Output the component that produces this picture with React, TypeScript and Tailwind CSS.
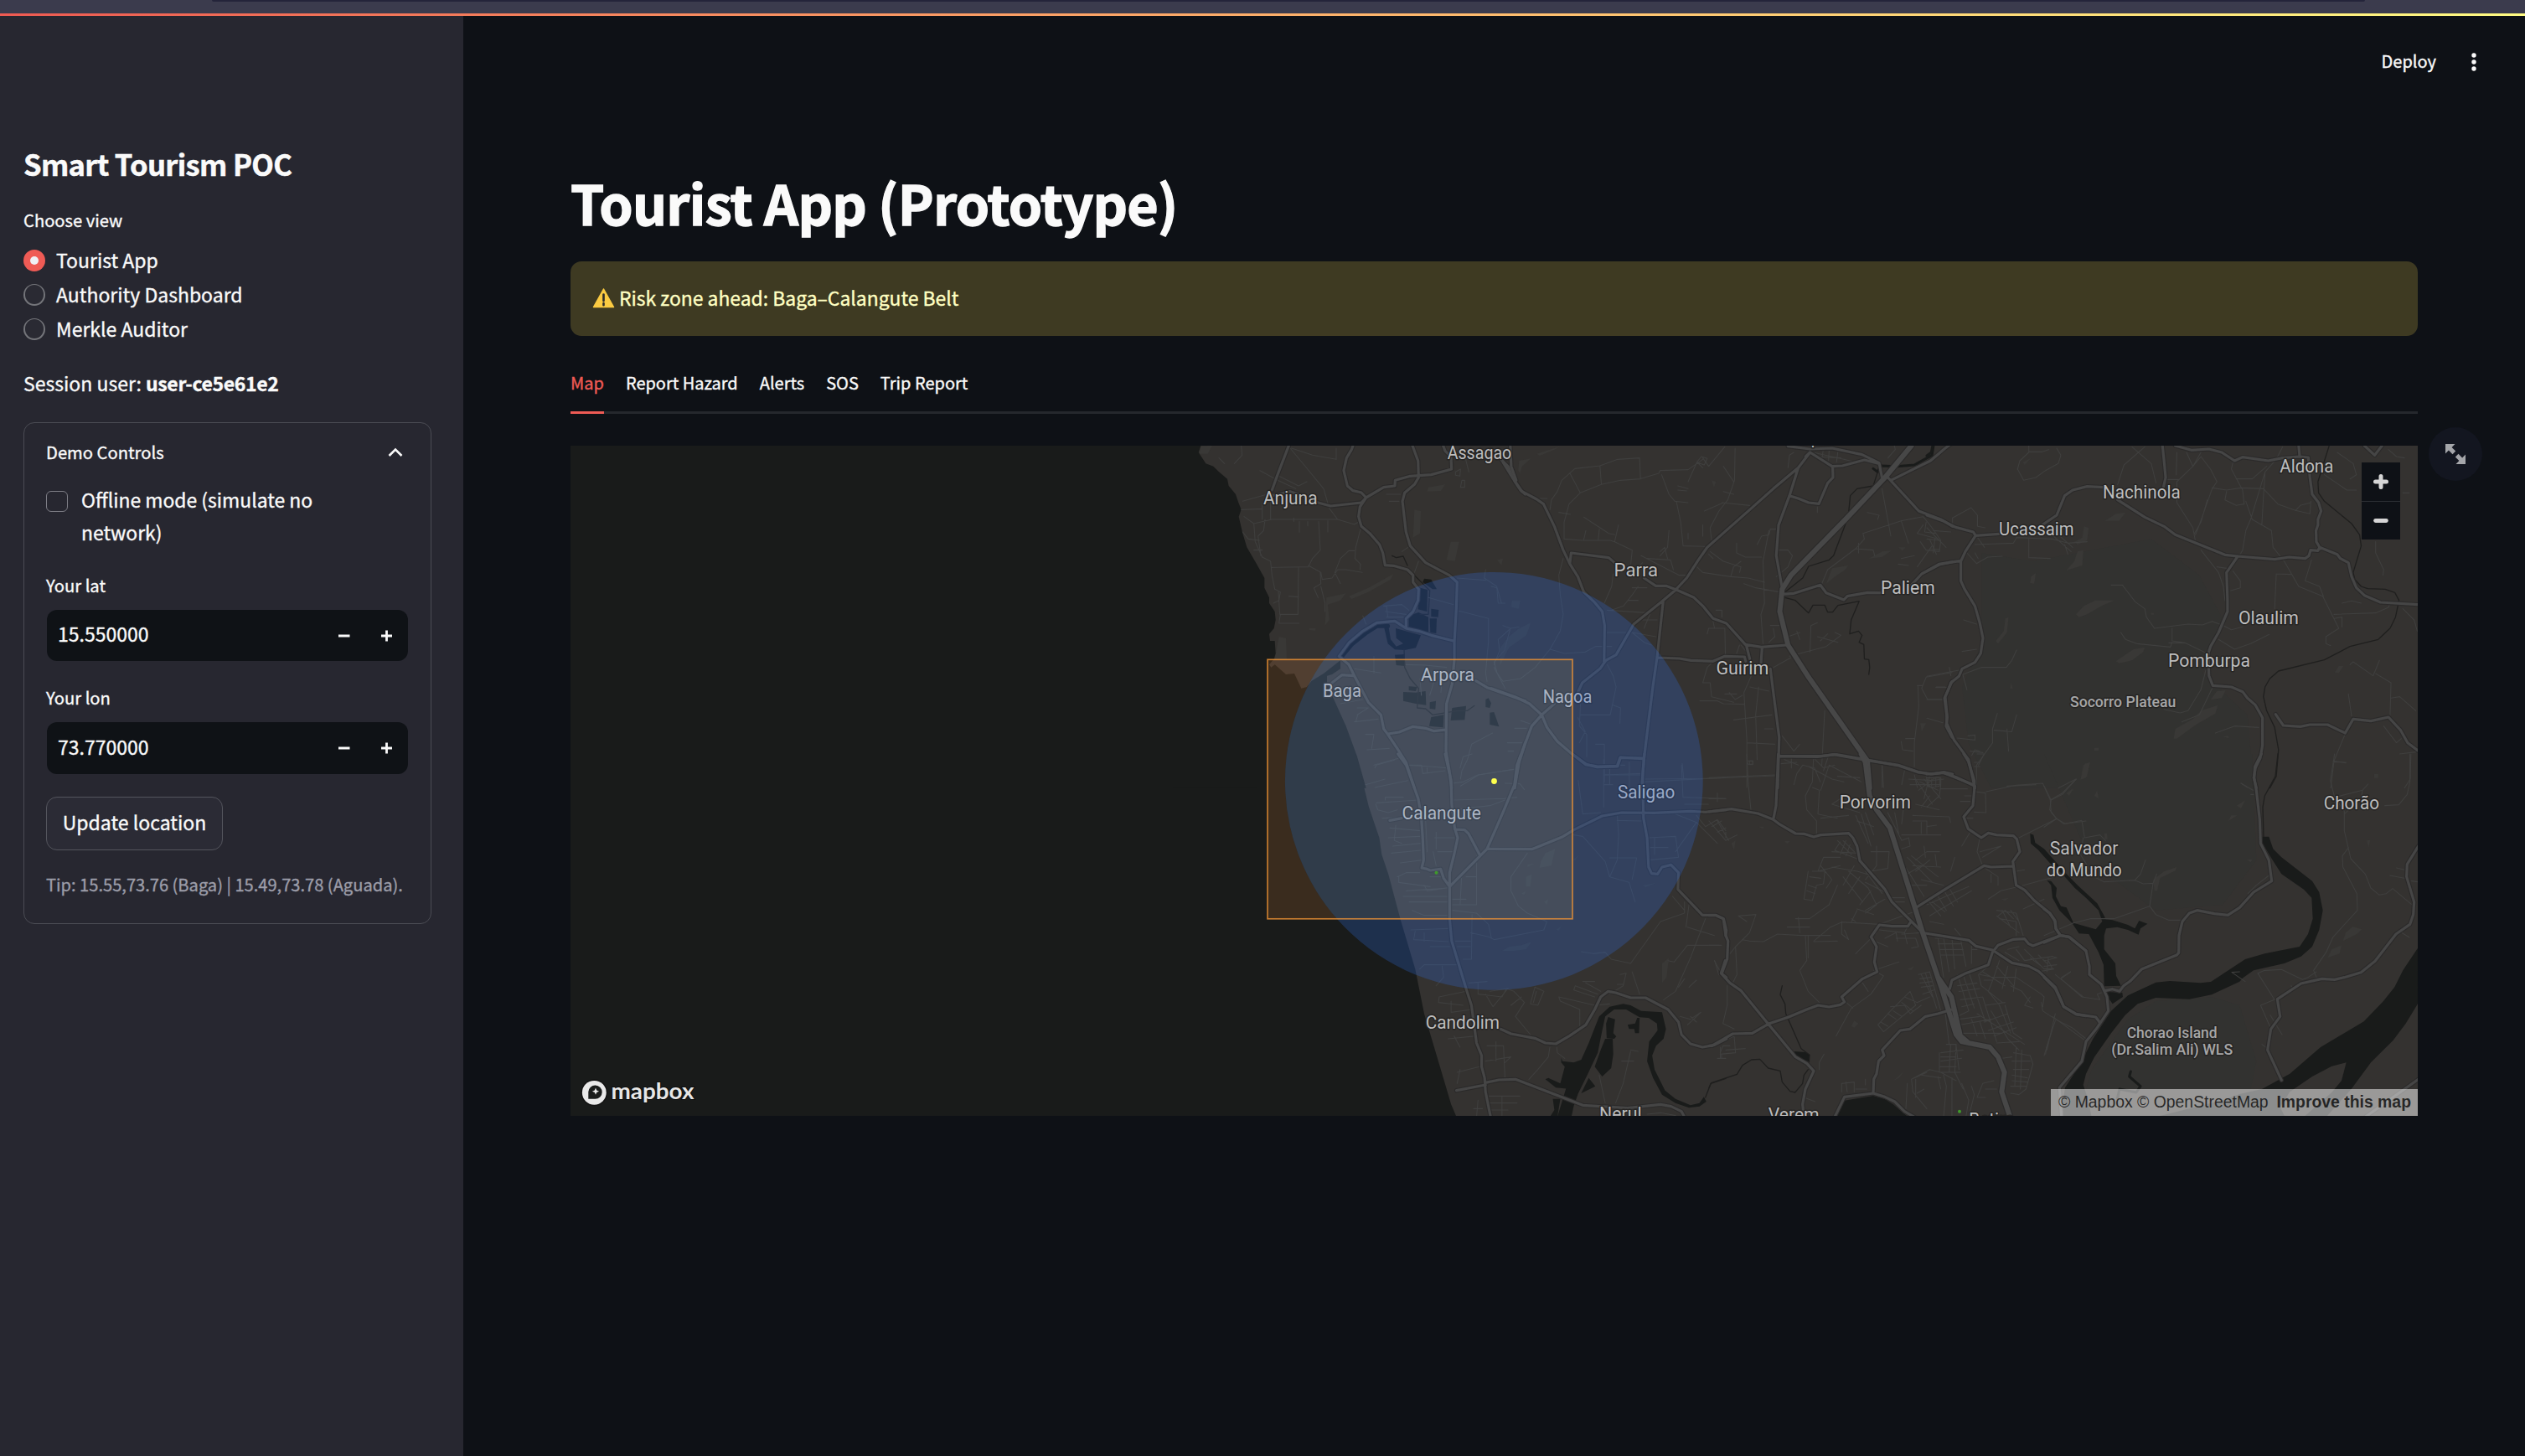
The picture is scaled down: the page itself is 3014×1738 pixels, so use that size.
import React from "react";

type Tile = {
  transform: string;
  shade?: string;
  patch: string;
  water: string;
  river?: string;
  creek?: string;
  stream?: string;
  minor: string;
  major: string;
  highway?: string;
};

// Road and water geometry, one entry per map tile.
const tiles: Tile[] = [
  {
    transform: "translate(1400 520) scale(0.33333)",
    patch:
      "M865,265L888,270L885,350L860,365ZM995,380L1025,380L1010,450L980,445ZM550,580L620,565L600,590L555,605L560,660L545,680ZM630,575L700,545L790,495L780,515L700,560L640,585ZM380,720L405,725L408,800L365,800ZM915,185L975,175L960,198L910,200ZM100,38L140,36L125,65L95,65ZM1215,590L1245,590L1235,620L1210,612ZM488,690L512,690L510,698L488,696Z",
    water:
      "M0,36L100,36L92,60L118,100L145,110L165,130L195,155L200,180L225,210L235,240L245,265L236,290L250,350L265,400L300,460L328,510L328,545L345,580L345,600L365,630L368,660L362,690L345,710L348,735L365,735L368,780L362,800L345,820L352,830L365,820L405,855L435,852L460,905L480,900L497,878L540,852L600,805L600,835L570,855L552,860L552,885L570,930L620,1040L660,1150L692,1262L0,1262ZM900,512L925,515L945,550L930,550L895,525ZM885,545L912,552L910,630L878,622ZM845,645L880,633L915,650L915,703L880,708L845,690ZM925,620L952,624L950,650L925,648ZM920,655L945,655L943,708L922,705ZM755,680L772,682L780,730L800,755L825,745L800,725L798,690L888,715L870,760L830,768L795,766L770,745ZM795,785L830,783L832,825L800,822ZM825,918L870,920L905,915L907,965L870,960L825,950ZM845,898L875,900L870,915L845,912ZM920,955L942,950L940,980L920,978ZM925,1008L970,1000L968,1045L918,1040ZM1000,975L1050,968L1045,1018L995,1020ZM1120,945L1130,940L1140,958L1135,975L1120,972ZM1135,992L1150,990L1168,1042L1135,1035Z",
    creek: "M604,792L640,748L690,708L730,682L770,682",
    stream:
      "M785,430L800,437L825,432L840,465M860,495L895,530L920,555L915,640L885,640M828,765L830,830L850,870L880,905L875,975L905,978L930,1000L1020,985L1055,985L1080,967",
    minor:
      "M165,80L185,100M245,36L248,70L220,100M312,125L375,160L440,190M420,45L470,105L540,190L560,260L590,300M425,45L500,70L585,85L585,45M380,145L450,180L480,165M250,235L330,212M245,265L320,262M255,290L290,315L355,300L590,300L650,318L672,305M350,215L350,300M320,240L320,300M433,295v12M453,308v38M483,308v15M555,305L555,345M522,308L528,410L500,440L485,470L355,472M290,315L295,380L320,435L350,450L355,500L365,550L385,560L380,590L360,600M450,472L448,640L385,640L380,672L452,672M672,335L655,400L652,440L672,460L670,480M485,465L530,490L535,515L570,510L590,480L620,480L678,490M650,412L630,412L600,440L580,490L600,530M528,490L530,530L505,545L520,580M530,540L545,600L545,630M383,640L378,560M330,300L325,340L305,360L315,430M250,345L270,370L310,375M290,410L320,410M415,575L450,578M755,610L820,605L845,625M760,630L835,640M765,650L825,650M765,610L770,650M680,645L692,675M820,415L842,400M880,450L865,490M1018,510L1120,518M1120,480L1115,510L1160,540L1165,600L1190,600M1025,628L1130,655L1130,740L1120,850L1125,880M1150,820L1170,770L1165,730L1210,690L1240,685M915,580L1005,605M650,835L745,850M720,790v60M835,820L905,822L980,830M1150,830L1190,905M650,1025L735,1015M655,1025L662,1000M690,1070L720,1070L712,1120M695,1125L775,1120M720,1180L810,1155M690,1250L760,1230M1030,1255L1095,1215L1220,1195M1145,1065L1070,1105L1055,1160L1035,1200L1030,1230M850,1180L890,1180L895,1210L975,1200M1200,1100h50M1200,1130h20M935,880L920,930M885,870L890,930M965,860L960,920M600,960L680,945M660,975L700,975L660,1000M1012,130L1030,120L1028,145L1012,142ZM1045,160L1045,185L1030,185L1035,160ZM1060,130L1045,70M765,210h50M775,235h35",
    major:
      "M415,36L375,140L355,195M355,215L420,200L450,210L520,240L565,252L675,240L692,222M645,36L640,50L622,80L612,125L625,180L645,197L675,204L692,222L755,185L795,180L796,160L850,145L925,140L998,120L996,75M692,222L670,255L665,290L675,325L705,350L740,390L752,420L760,464L790,466L840,480L860,500L860,525L880,550L878,590L860,630L835,655L835,688M858,36L878,90L880,150L865,175L830,205L822,235L835,345L850,395L905,455L990,500L1018,525L1015,620L1008,740L1008,800L1000,890L980,960L978,1130L990,1200L998,1262M595,790L632,740L680,700L730,670L795,664L835,690L880,700L925,715L1005,735M595,790L630,820L650,860L700,955L745,1000L755,1050L770,1070L800,1115L835,1170L865,1262M570,885L605,857L648,860M770,1068L810,1062L860,1042L905,1048L935,1058L978,1053M1085,878L1125,902L1262,950M1262,1100L1240,1170L1222,1262M1165,75L1200,110L1225,165L1245,195L1262,210M968,36L975,55L996,75",
  },
  {
    transform: "translate(1780 520) scale(0.35077 0.33333)",
    patch:
      "M155,65L235,38L215,50L165,72ZM30,760L60,720L95,690L135,670L120,715L60,760L30,825ZM1160,475L1215,465L1205,480L1170,505L1140,530ZM1285,440L1330,415L1362,412L1330,435ZM70,595L98,590L95,620L70,615ZM95,90L135,82L105,110L98,135L92,125ZM20,445L40,440L35,465ZM750,160L765,165L758,185ZM1460,1030L1480,1030L1465,1060ZM1385,400L1410,400L1400,412Z",
    water: "",
    river: "M1300,118L1315,130L1325,108L1380,110L1440,105L1500,70L1505,36",
    stream:
      "M1315,130L1300,180L1245,190L1222,215L1215,290L1165,430L1150,445L1080,468L1060,510L1000,560M1000,580L1035,590L1080,635L1095,607L1135,607L1145,632L1162,632L1180,608L1252,593L1225,660L1220,710L1250,700L1262,715L1252,740L1268,748L1270,800L1285,802L1288,830L1285,855",
    minor:
      "M200,265L205,230L225,200L240,160L285,118L370,108L430,85L505,80L508,155M165,225h25M230,275L270,282M268,135L303,205M370,108L375,175M508,155L440,160L375,175L303,205L265,245L248,310L248,370L310,375L405,375L420,380L480,410L475,460M315,292L400,350L420,355M433,320L420,380M322,340L315,372M368,335L364,375M505,155L570,135L575,125L670,122L720,85M580,140L605,210L625,235L670,240M630,235L645,310L653,395L730,397M830,45L828,160L805,230L775,270L745,330L750,375M720,80L740,110L795,40M700,95L715,75L735,82L725,105ZM720,115L700,95L670,165M790,110L825,165M790,200L825,210M635,180L670,190M635,195L665,198M785,240L880,250M725,270L790,240M605,340L600,400L575,430M575,415L590,400L600,440M510,430L640,500L680,500M515,455L500,470M530,440L610,445L620,480M700,470L720,490L815,505L875,510L930,525M745,415L790,450L850,470L845,490M740,425L755,440M815,505L825,470L850,450M835,385L835,420L865,435L920,435M905,390L920,360L945,355L950,335L970,335M945,340L925,450L930,600L918,640L925,745M978,410L1010,410L1025,430L1010,470L970,505M860,530L900,545L980,560M415,495L410,540L385,600M245,440L230,500L235,570L245,640L235,700L200,765L150,830L100,870L40,880M200,765L250,780L320,775L355,755L410,755M395,625L540,635M500,540L480,570L450,610L410,625M480,545h50M465,590h35M540,640L520,690M515,660h50M385,705L480,705L560,720M480,705L520,740L545,750M395,820L415,860L425,900L405,1000L305,1000M305,940L300,1040L325,1070L325,1150M295,1010L320,1060L300,1100M415,965L440,975L438,1030M355,1105h30L385,1240M470,1170L470,1260M385,1215L515,1215M395,1180h60M515,1230L720,1228L968,1218M650,1175L655,1230M1280,275L1320,285L1315,300M1265,350L1395,305L1470,290L1500,330L1530,375L1525,415L1480,410L1460,380M1330,190L1360,360M1395,305L1420,385M1265,350L1270,370L1240,405L1145,480L1125,530M1240,405L1300,410L1305,430M1250,385v35M1500,395L1450,470M1470,320L1450,350L1520,370M1480,310L1475,345L1510,350M1395,440L1440,430M1385,460L1420,465M735,710L740,690L795,690L797,790M755,665L760,690M765,625L785,625L785,650M960,690L965,720L945,740M950,680h30M1085,775L1088,680L1110,670M1015,790L1140,755L1190,715L1170,705M1110,720L1180,740M1120,735L1145,710M960,830L1020,795M1010,720L1050,705M1040,700L1050,730M720,885L735,830L750,815M720,885L745,885L750,935L825,955M710,950L770,950L790,960L860,962M810,920L830,945L855,930M795,925h40M885,860L860,920L870,1090L870,1260M910,900L900,1000L905,1160M880,900L945,915M825,1018L955,1000M870,1100L965,1105M930,1050h30M1135,985L1125,1180M990,1075L1030,1130L1050,1105M1480,865L1568,848M1480,865L1465,905L1485,945L1545,945M1452,895L1455,970L1440,1100L1440,1185M1450,895L1468,895M1515,900h30M1395,1095L1400,1125L1435,1130M1410,1085h30M1060,1180L1100,1190L1120,1240M1060,1180L1040,1210L1030,1250M985,1175L1040,1170M1080,1185L1160,1230L1200,1240M1330,1170L1335,1260M1420,1230L1500,1235L1540,1230M1440,1215L1450,1260M1480,1220L1490,1260M10,810L45,770L65,690L40,680M10,810L20,850L40,880M0,540L20,545L35,600M55,1100h45M80,1048h40M100,1020L140,1035M870,1165L890,1165L890,1178L875,1178Z M1010,115L1015,70L1030,60M1110,255v20M1095,60L1200,85L1240,95M1130,50L1125,85M1150,50L1148,90M1180,55L1175,95M1100,75L1190,80M1350,80L1375,50L1372,36M865,770L850,750M835,780L845,750M670,350v20M720,320v40",
    major:
      "M40,95L75,155L105,200L155,228L178,245L215,325L245,410L268,460L295,505L315,560L350,595L378,630L386,680L384,810M65,36L68,110L85,160M268,455L272,420L400,437L425,460M520,510L560,538L595,538L630,552L690,580L720,610L755,655L800,672L865,748L920,757L1005,750M1085,60L1045,115L960,190L880,265L735,400L705,445L665,510L625,555L580,595L485,675L425,785L390,805L370,835L310,885L290,930M1045,115L1015,215L978,320L970,430L990,545M1015,215L1045,225L1080,240L1115,244L1145,170L1163,150L1162,110M1010,38L1085,48L1160,45L1262,68L1320,98L1330,150M1070,75L1085,60L1160,110L1195,108L1270,87L1320,100M1350,150L1455,270L1530,300L1570,325M1360,160L1495,90L1545,45L1570,25M585,595L565,790L550,900L520,1155L512,1262M565,795L640,798L680,805L755,808L795,790L862,792L866,808M868,750L880,800M922,757L918,815M950,835L965,960L980,1080L975,1262M990,568L1030,565L1120,535L1140,563L1200,588L1212,575L1280,562L1325,563M1430,535L1465,495L1525,462L1570,452M980,1148L1110,1150L1165,1142L1280,1163L1385,1180L1455,1205L1500,1212L1540,1205L1570,1212M0,905L80,935L130,960L172,1000L190,1045L225,1095L275,1140L325,1178L360,1187L430,1185L440,1152L515,1157M172,1000L138,1040L95,1160L80,1262M172,1000L215,960M1568,880L1545,935L1552,1010L1548,1040L1568,1080",
    highway: "M1430,36L1340,150L1210,295L1020,500L990,550L982,630L1010,750L1080,865L1280,1165L1288,1262",
  },
  {
    transform: "translate(2300 520) scale(0.38265 0.33333)",
    shade: "M170,420L330,450L700,370L850,500L920,650L860,850L1000,1000L1020,1262L200,1262L130,1100L110,900L170,750Z",
    patch:
      "M555,305L590,280L620,275L600,305ZM490,325L505,330L500,375L470,390L460,380L485,365ZM465,640L490,610L525,590L585,590L545,610L500,640L475,650ZM470,415L488,410L485,465L435,483L460,450ZM245,655L255,650L250,705L222,745L215,735L240,700ZM590,808L625,780L645,765L680,758L675,775L640,805L600,815ZM770,1085L775,1050L830,1015L855,985L908,965L900,995L840,1035L810,1060L780,1085ZM885,945L905,915L932,912L920,940ZM325,505L340,492L335,530L322,528ZM488,1180L508,1170L500,1220L480,1230ZM1272,848L1285,825L1300,825L1285,850ZM300,95L325,80L305,105ZM925,1078L940,1075L942,1084ZM1398,1213h10v12h-10ZM698,635h10v6h-8ZM522,1118h14v10h-14ZM262,885L268,905L260,905Z",
    water: "",
    stream:
      "M1255,36L1220,165L1222,205L1240,235L1325,315L1350,355L1355,395L1330,490L1335,515L1355,540L1375,548L1430,550L1460,562L1473,590L1462,650L1445,690L1408,730L1320,755L1240,803L1097,843L1070,870L1055,900L1050,935L1060,985L1085,1045L1097,1125L1090,1220L1070,1262",
    river: "M0,72L14,60L18,36",
    minor:
      "M318,36L318,60L290,90L283,120L302,160M318,58L360,58L380,50M405,45L418,70L410,100L370,125L340,150L302,160M595,175L615,105L660,60L680,40M640,40L700,100L715,170M810,60L830,110L780,165L780,240L830,330L838,380M780,60L778,140M750,157L785,157M830,110L855,75L885,120L905,165L890,190L850,320L838,355M855,60L830,110M875,230L855,310L835,350M890,187L935,195L980,187L1050,190L1095,245L1150,268L1195,280L1198,235M1150,268L1165,250L1198,240M930,230L935,200M930,230L965,250L990,245L985,195L950,120L955,95M965,155h50L1060,110M1090,85L1055,130L1010,300L995,340L985,410L975,430M1055,130L1050,220L1045,320M1110,40L1090,85M995,235L1015,300L1075,340L1080,400L1115,450L1160,540L1235,575L1285,690L1245,720L1245,745L1260,752M1090,495L1085,620M1090,495L1135,497M855,410L910,490L925,540L930,590M905,470L935,475M955,485L978,520L978,545L948,555M1200,445L1180,520L1225,540L1237,575M1270,640L1400,635L1440,615L1445,600M1270,655L1295,650L1295,685M1295,600L1325,592L1355,600M575,535L610,535L650,595L680,620L685,650L710,690L815,675L860,678L890,665L925,680L950,695L985,685M605,705L620,730L655,745L760,757L765,740M765,690L765,735L805,742L870,778M755,742h50M910,730L960,765L1010,745L1068,712M280,768L265,805L248,830L170,830L112,855M112,855L125,910M0,862L100,840M70,830L75,860M28,902h35M0,945h50M0,1012L50,1028M110,773L155,765M115,660L155,675M150,390L270,385L280,365L390,370L440,385L500,380M318,370L318,437L385,440M385,350L450,415M400,345L455,400M430,390L440,425M80,295L138,258L158,285L158,325L182,330M80,295L80,325M155,360L180,400M125,420L155,458L190,435L235,432M150,420L160,440M0,330L60,400M20,340L75,345M0,370L40,375M10,375L30,425M25,370L20,420M10,405L40,408M870,840L855,910L815,985L790,993L740,980M890,905L850,1000L795,1025M220,995L205,1050L205,1100L155,1180L155,1262M250,1050L255,1130M210,1055L265,1060L280,1000M95,1083L150,1090L150,1072L128,1075M135,1130L175,1135M140,1145L150,1125L165,1130M1320,820L1330,810L1392,860L1412,805M1400,852L1448,885L1445,1000M1315,925L1325,1005M1448,940L1475,935L1525,985M1305,1068L1270,1165L1260,1262M1270,1168L1308,1170M1425,1040L1465,1100L1480,1085M1475,1140L1530,1132M1510,1140L1508,1230L1490,1262M900,1065L960,1040L1035,1045M250,1255L340,1250M410,1262L465,1230M0,1225h40L40,1255L10,1260M15,1230v25M28,1228v30M1240,140L1310,195L1340,195M1280,60L1330,100L1340,140L1320,155M1400,380L1400,420L1425,480L1423,500M1485,620L1520,660L1530,700M1440,50L1465,75L1490,80M1485,205h20M980,1245L1000,1260",
    major:
      "M0,285L50,305L90,328L145,345L152,358L225,352M360,320L405,285L430,215L455,195L500,182L550,185M152,358L120,415L106,450L106,520L118,550L150,610L165,670L175,725L168,780L150,812L110,835L100,862L75,885L65,915L55,940L62,1000L62,1030L85,1090L130,1160L150,1262M106,448L38,460L0,485M0,1212L50,1207L95,1225L150,1255M735,36L740,90L745,150L738,185M595,230L680,292L740,325L775,355L930,427L970,432L1085,443L1130,435L1180,440L1192,430L1197,410L1220,412L1225,400L1280,425L1290,440L1315,455L1325,505L1340,545L1365,572L1415,597L1532,605M775,36L825,52L880,48L920,60L960,90L985,77L1065,90L1110,80M1110,80L1163,75M1160,36L1163,75L1190,78L1195,150L1202,210L1222,240L1230,270L1220,300L1220,320L1214,340L1215,380L1228,405M1365,36L1397,70L1420,36M970,432L935,490L938,590L938,630L910,705L885,755L878,780L880,860L892,895L950,900L985,917L1000,940L1025,965L1047,1010L1047,1110L1040,1155L1025,1190L1020,1225L1028,1262M1088,998L1112,1038L1165,1042L1195,1035L1250,1035L1305,1065L1330,1015L1385,1022L1440,1008L1478,1055L1500,1100L1532,1128",
  },
  {
    transform: "translate(1500 900) scale(0.35714 0.33333)",
    patch:
      "M820,705L845,690L885,685L920,672L900,700L860,705ZM950,385L965,355L998,340L985,400L945,408ZM1050,385L1080,360L1065,380ZM900,440L920,430L915,475L900,475ZM1290,470L1335,462L1300,478ZM1355,820L1355,750L1378,730L1370,800ZM1000,630L1020,615L1010,632ZM905,395L930,392L905,405ZM885,500L900,490L895,505ZM960,530L975,520L970,540Z",
    water:
      "M0,0L332,0L375,190L410,300L418,360L440,430L480,590L530,770L560,930L610,1110L650,1255L668,1300L0,1300ZM1005,1300L1035,1195L1060,1105L1085,1095L1110,1035L1145,940L1180,905L1225,895L1250,900L1285,920L1355,925L1368,985L1360,1020L1335,1045L1322,1080L1330,1130L1365,1205L1400,1235L1450,1258L1480,1250L1495,1228L1503,1245L1480,1262L1445,1267L1400,1250L1355,1220L1325,1160L1305,1100L1312,1030L1340,990L1338,965L1310,945L1280,943L1235,915L1195,915L1165,940L1155,990L1140,1070L1105,1150L1075,1215L1060,1260L1052,1300ZM1175,942L1198,950L1192,1000L1202,1012L1195,1020L1170,1018L1168,965ZM1165,1020L1190,1020L1192,1075L1185,1125L1155,1155L1130,1120L1150,1060ZM1085,1215L1110,1160L1132,1190ZM1240,970L1265,965L1272,945L1280,945L1278,1000L1265,1000L1262,985L1245,985ZM1018,1088L1022,1100L1060,1105L1050,1200L1000,1195L965,1165L975,1160L1015,1180L1030,1120L1018,1105ZM990,1235h25L1005,1300L980,1300L995,1275Z",
    stream: "M1500,1230L1518,1180L1568,1162",
    minor:
      "M395,50L400,40L460,22M395,120L505,95M400,175L540,165M398,180L405,200L440,210L470,200M430,165v-10h60M420,230L545,225M445,265L550,275M440,300L545,295M465,255L460,310L485,320M455,330L550,320M450,355L550,345M480,390L555,380M510,40L580,45L635,50M570,50v15M680,50L690,10L720,0M655,105L690,100L740,75L860,55M655,165L825,160L870,155M660,200L780,185L830,165M830,105L880,107L895,128M470,440L500,425L545,425M475,440L475,460L580,475M560,470L570,490L645,478M590,350L600,400M595,300L660,300M605,350L655,350M565,240L570,350M600,280L600,340M580,440L625,440M490,510L640,510M500,490L640,480M510,530L640,530M520,560L560,578L645,578M685,440L680,540M655,540L735,540L735,365M655,560L735,570L775,610L785,660M700,440h35M655,520L700,520M720,575L718,735L690,735M515,630L640,625M530,635L525,665L640,672M560,640v30M580,690h65M545,770L560,755L680,755M620,760L625,800L600,830M670,690L715,690M665,670L715,670M715,640L775,655L795,665L960,630L970,600L905,570L875,545L850,490L850,440L905,355M710,820L770,815M740,820L740,860L820,870L835,840L860,850L895,890L865,940L915,1005M610,870L700,850M610,870L608,890L690,900M650,885v40L720,915M765,860L790,905L840,840L780,850M850,900L885,870M930,835L960,850L940,900L915,895L930,835M935,850L925,890M1010,870L1130,900L1180,895M1010,870L1015,885L1080,915L1080,975M1065,830L1140,860M1065,830L1060,845L1130,870M1100,820L1150,850M1090,815h40M1075,95L1090,215L1150,210M1160,20L1160,190M1180,45L1180,110M1160,75L1290,70M1160,110h30M1290,100L1568,85M1420,40L1425,155L1568,160M1430,180h80M1310,300L1400,295L1410,370L1310,380M1330,300v60M1315,335h60M1205,215L1210,290L1205,380L1180,440L1245,460L1265,530M1205,238L1290,240M1180,372h90L1255,450M1060,290L1090,295L1165,385L1180,440M1400,215L1470,245L1540,320M1470,220L1500,260L1540,235L1568,275M1400,350L1470,245M1430,530L1430,570L1350,600L1250,750L1185,735L1165,710L1125,715L1085,708M1390,510L1430,560M1445,540L1435,620M1500,590L1450,730L1400,850L1360,880M1440,620L1530,650M1440,685L1545,685M1440,685L1395,745L1375,740M1215,790L1235,785L1225,830L1180,860M1205,825h20M1255,780L1280,860M1530,740L1550,780M1410,835L1430,805M1445,835L1470,810M980,1050L975,1085L940,1130L910,1165M1003,1050L1005,1070L1030,1090M1250,1060L1275,1065M1250,1065L1225,1180L1200,1250M1220,1100L1260,1100M1145,1150L1165,1250M640,1020L735,1010M660,1010L680,1050M670,1140L745,1120M670,1180L680,1130M770,1045L825,1045L830,1160M765,1100L850,1085L830,1105M800,1030v70M770,1225L880,1225M740,1240L735,1300M725,1270h30M780,1250L870,1250M780,1275h60M820,1225L820,1300M1415,940L1450,950L1485,925L1440,970M1450,940L1470,960M1540,1090L1568,1090M1550,1050v40M1305,1290L1350,1285L1400,1295",
    major:
      "M472,0L500,40L540,160L550,220L555,300L558,380L552,408L570,412L580,417L615,412L625,445L645,475M630,0L650,95L652,180L662,265L672,300L660,360L645,425L645,590L652,670L700,840L718,900L735,1035L752,1080L752,1120L762,1160L765,1210L782,1300M885,0L870,40L862,110L825,205L770,340L645,475M662,270L695,272L708,285L745,360M770,340L920,341L1020,298L1060,272L1155,222L1220,210L1330,211L1450,205L1500,208L1570,200M445,238L485,230M1055,0L1100,38L1140,45L1205,43L1215,13L1290,15M1296,0L1290,80L1293,230L1305,300L1310,405L1320,428L1340,430L1355,405L1385,397L1410,425L1408,485L1490,577L1535,577L1560,590L1568,650M1566,740L1552,785L1570,800M815,985L850,1002L930,1018L965,1035L1000,1038L1045,1010L1100,970L1130,915L1150,870L1175,850L1200,855L1250,873L1300,873L1375,915L1410,960L1420,1005L1450,1038L1490,1050L1530,1042L1570,1020M668,1205L765,1185M765,1177L810,1167L865,1165L1090,1258L1240,1268L1350,1255L1385,1262L1420,1280L1430,1300",
  },
  {
    transform: "translate(2040 900) scale(0.33333)",
    patch:
      "M510,975L520,955L535,965L520,980ZM710,770L735,760L725,775ZM1280,140L1310,125L1285,145ZM660,1170L700,1135L680,1160ZM80,320L95,310L90,345ZM270,312L290,312L280,322ZM1045,520L1075,515L1060,525ZM178,260h20l-5,8Z",
    water:
      "M455,1300L480,1242L588,1224L630,1236L660,1255L700,1290L715,1300ZM305,1065L345,1068L360,1078L358,1102L330,1095L310,1080Z",
    stream:
      "M262,830L255,862L272,895L275,930L330,1055L360,1078L358,1104M0,1195L8,1178L100,1147L120,1115L152,1095L182,1093L212,1125L255,1135L262,1175L290,1208L308,1212L335,1180L340,1150L355,1130",
    minor:
      "M135,0L140,100L150,200M145,25h12v12h-12ZM0,85L235,75M0,160h60M30,140v30M375,0L370,100L345,150L350,200L385,240L385,290M370,120L395,130L390,215L460,230M270,20L320,40M295,10v40M430,40L400,130M430,40L545,100M430,0L410,60M380,20L410,50L450,40M460,80L540,85M440,180L540,210M470,160L440,180M400,230L500,220M545,215L580,330M560,210L590,290M525,220L570,320M530,240L590,260M580,350L645,350L640,410L580,420M600,330L600,400M640,210L690,310M665,210L680,290M700,160L690,250M690,310L715,300L720,330L690,340M720,110L830,110L825,150L780,190M740,90L800,180M755,100L820,130M770,90L830,160M790,80L770,160M750,130L810,85L830,85L830,110M740,180L825,200M760,190L790,150M730,220L860,225L865,245M730,240L780,240L780,285M760,245v40M780,260L815,255M690,290L830,290M620,40v80M700,60L690,110M830,125L925,125M915,150h25M900,170h35M915,230h30M955,135L990,140L992,210L950,208M992,135L1100,112L1195,105L1222,165L1225,210L1245,232L1270,250L1350,240M1245,232L1110,300M1222,165L1265,140L1315,90M960,0L985,0L965,40M950,30h20M950,45h20M935,280L905,330M740,380L780,350L825,350M770,330L775,370M710,370L800,460M725,365L820,440M730,400L830,405M760,450L840,470M700,400L770,510M710,430L760,400M740,420L790,380M780,470L720,470M810,360L815,400M970,300L960,350L980,400M970,350L1045,330L980,370M880,370L865,420M990,410L1035,440L1035,470M1010,430v30M1100,420L1130,415M460,310L510,360M480,310L520,350M470,315L450,345L530,375M490,310L470,360M505,325L490,365M440,350L530,355M355,420L340,520L370,525L385,470L410,465L415,420L370,420M360,440L400,445M355,470L385,480M350,490L380,500M410,370L470,370M410,370L390,420L470,400M440,405L530,420L600,440M400,400L440,450L420,480M500,420L570,480L600,540L560,570M480,440L550,530M540,440L500,500M560,460L640,500M520,400L480,470M600,400L560,450M630,520L560,560M580,490L540,540M560,420L620,500M650,530h50M650,515h50M460,470L430,540L360,590L340,590M510,600L530,560M525,600L510,590M530,555L590,575M435,620L475,602L610,610L735,565M475,600L475,645L500,665L485,630M435,620L375,670M105,580L168,575L145,640L95,690L75,715M105,580L135,600M95,690L100,790L85,820M120,665L145,670L195,672L245,645L330,650L435,650M320,585L325,640M310,590L355,590M280,620h80M345,650L350,740L325,775L355,850L395,890M355,650v80M0,685L45,685M20,740L35,790M375,672L460,670M610,630L700,640L720,600M630,660L670,640L675,670M525,715L600,640M580,665L640,690M670,660L740,660L750,690L725,695M700,640L710,680M690,645L760,640M780,540L870,500L930,475M790,580L940,490M780,520L830,580M800,530L845,565M820,510L850,560M845,495L875,545M860,480L890,530M790,600L840,610M1000,520L1045,490L1110,475L1200,450L1240,440M1125,555L1200,520M1030,560L1100,570L1125,650M1035,580L1060,560L1090,590M1040,590L1100,600L1100,650M1050,560L1080,620M1030,580L1110,640M1080,560L1110,600M810,660L900,660L920,760M820,680L905,680M825,700L910,700M830,720L910,720M820,660L840,800M840,660L860,780M870,660L880,770M880,625L900,650M940,670v80M940,700h20M890,790L930,920L890,940M910,790L950,910M930,780L990,960M890,830L960,820M895,850L970,840M900,880L980,870M905,905L950,895M1000,760L965,790L975,830L1050,890M970,790L1020,800L1100,800L1190,860L1200,870L1195,905M980,780L1060,830M985,810h30M1040,740L1020,800L1000,850L1040,900M1030,760L1090,830M1070,760L1050,840M1080,830L1120,850L1150,890M1100,770L1090,850M1150,870L1130,900L1160,910M1100,700L1130,740M1130,740L1230,725L1245,730M1130,700L1200,770L1230,770L1215,740M1150,730L1190,760M1180,720L1210,750M1060,710L1110,740M1070,700L1110,690M750,790L790,780L830,920M760,790L800,870M775,785L815,910M755,805L795,800M755,820L800,815M760,835L800,830M765,860L805,845M720,850L740,900L625,995L605,970L650,920L720,850M640,930L670,950M660,920L690,940M690,890L730,920M615,960L640,975M700,870L745,890L790,870M650,905L700,900L720,930L760,900M600,780L625,795L580,860L510,910L455,1010M480,880L515,910M550,820L570,850M590,775L680,745M980,870L1030,1030M990,900L1060,890M960,930L1130,1040M985,960L1070,930M1010,920L1070,1020L1110,1060M1040,900L1080,1000M1000,990L1090,960M1020,1010L1100,980M900,970L1010,950M910,1000L1050,1000M895,950L970,940M940,950L960,1010M970,960L990,1020M1060,900L1090,1000L1120,1020M1030,1035L1110,1030M850,1040L885,1040L880,1140L910,1200M865,1040L860,1140M830,1070L910,1060M830,1085h55M830,1100L905,1090M825,1120h60M825,1140L900,1140M825,1070v70M845,920L860,1040M885,1045L895,1130M725,1165L790,1130L830,1140L885,1170M725,1165L730,1210L780,1270M740,1165L740,1230M725,1165L780,1140M745,1215L770,1200M760,1150L830,1160M820,1155L830,1200M840,1150L850,1190M850,1190L840,1300M870,1160L870,1300M905,1180L930,1240L920,1300M1090,1070L1150,1080L1160,1110L1135,1200L1110,1220L1080,1215M1085,1100L1150,1100M1090,1130L1145,1130M1085,1150L1140,1160M1085,1170L1140,1175M1080,1190L1135,1190M1100,1050L1095,1190M1120,1060L1115,1200M1050,1090L1085,1085M980,1180L960,1230L990,1230M980,1180L1020,1170M940,1190L950,1220L930,1300M990,1200L1030,1200M65,830L65,900L50,965L90,985M70,1020L90,1010L95,1070L40,1075M40,1070L50,1045L75,1045M45,1075v15M60,1060L130,1055M0,240L60,310L100,290M30,240L70,310M10,260L45,240M30,280L60,265M60,300v-20M1190,890L1195,920L1240,950L1300,980L1350,1020M1240,930L1210,1060M1225,1000L1200,1080M1180,780L1235,770M1262,800L1295,780M1240,790L1290,830L1340,870M475,1210L475,1180L520,1175L520,1210M490,1175L495,1210M560,1165L560,1185M525,1200h40M710,1180L705,1270M395,1130L395,1105L412,1075M340,1230L380,1245",
    major:
      "M0,207L80,197L175,213L230,235L250,250L310,285L340,286L375,297L400,290L500,284L515,300L530,330L540,382L630,485L655,530L760,635M248,0L240,185L230,235M248,8L400,8L455,2L550,18L680,42L750,66L795,72L840,67L950,112M912,0L928,25L950,95L950,130L945,185L912,225L928,268L975,300L1000,283L1030,290L1090,293L1102,305L1113,350L1088,385L1100,470L1130,487L1165,525L1220,570L1240,600L1242,625L1258,650M1088,402L1010,405L985,400L845,485L745,548M1350,705L1290,655L1258,650L1205,670L1160,687L1145,680L1130,662L1090,664L1035,685L1015,710L1000,755L920,785L870,810L862,840M775,642L930,667L955,688L1015,702L1085,748L1145,760L1180,778L1240,835L1262,885L1270,905L1315,932L1350,938M720,605L712,617L655,617L610,612L580,655L600,690L592,745L602,780L550,805L475,870L485,888L470,898L430,906L390,900L350,915L285,942L212,967L155,1000L85,1002L10,1045L0,1045M0,578L25,578L52,590L62,632L60,650L68,670L65,735L45,787L75,820L115,848L212,967L310,1085L350,1108L375,1135L345,1200L335,1255L340,1300M870,915L820,930L775,940L720,985L685,990L620,1060L627,1080L607,1100L600,1145L590,1165L588,1215M450,1300L485,1228L588,1215L630,1228L665,1245L700,1280L735,1300",
    highway:
      "M545,0L560,30L575,150L600,200L648,265L700,430L765,640L830,830L885,1005L905,1030L1005,1050L1035,1085L1058,1140L1048,1210L1078,1300M820,800L868,870L900,1010L930,1035",
  },
  {
    transform: "translate(2440 900) scale(0.33333)",
    shade:
      "M0,0L745,0L760,380L640,540L400,560L250,450L130,300ZM150,1200L170,1130L300,950L400,885L600,870L700,900L760,1100L740,1200Z",
    patch:
      "M135,75L145,35L165,30L150,85L130,92ZM180,150L190,130L195,160ZM395,490L390,450L430,420L475,405L470,418L415,445L405,490ZM690,185L720,165L705,195ZM660,240L670,220L692,220ZM1070,670L1080,640L1105,618L1138,628L1120,645ZM1015,730L1030,700L1065,685L1058,715ZM1155,310L1168,308L1162,335ZM80,140L105,122L90,150ZM215,285h10l2,20h-10ZM725,378h20l-5,10ZM1182,72h14v14h-14Z",
    water:
      "M-50,285L-38,290L-32,318L0,340L40,385L80,430L120,470L190,535L215,580L220,592L245,595L300,612L325,625L340,597L370,608L345,625L338,647L300,630L262,620L222,625L215,650L215,700L255,750L258,795L275,830L215,832L213,755L195,710L160,645L125,643L100,605L55,560L30,515L25,470L10,452L25,455L45,480L42,510L60,545L80,550L105,605L185,628L208,600L195,560L150,515L110,480L70,435L20,390L-20,345L-48,320ZM225,852L280,855L282,870L245,895L228,870ZM782,296L805,296L820,340L850,370L960,455L985,495L998,560L985,630L960,690L920,725L860,750L750,775L712,802L700,815L600,862L520,878L400,873L335,895L290,935L240,1000L180,1085L150,1145L140,1185L155,1230L170,1300L60,1300L75,1195L130,1110L175,1020L240,920L300,865L400,818L450,813L560,820L597,816L720,735L790,715L915,690L945,645L962,590L958,515L930,485L850,430L815,375L782,320ZM1338,695L1285,775L1255,835L1215,885L1145,958L990,1050L880,1145L780,1200L700,1218L640,1240L400,1300L1010,1300L1100,1200L1170,1105L1250,1025L1295,965L1338,895Z",
    river: "M310,1137L305,1155L345,1190L330,1212L270,1200L262,1235",
    stream: "M837,0L828,80L790,150L783,190L786,296",
    minor:
      "M0,115L25,165L20,200L45,232L75,250L135,238L145,300L200,290L220,310M25,165L65,145L115,90M0,262L45,232M140,300L130,360L180,440L215,458L325,452L355,465L390,463L378,545L250,590L165,590L105,605L0,650M325,452L345,430L363,380M390,463L403,430M378,545L400,575L445,595L510,595M730,500L760,470L805,435M705,105L748,130M740,145h10M1040,0L1025,95L1040,155L1075,205L1075,275L1090,340L1098,375L1150,430L1170,480L1200,505L1225,500L1248,482L1315,538M1035,25L1080,32M1040,155L1140,130L1160,108M1140,130L1135,160L1075,215M1310,0L1310,100L1300,145L1270,182L1220,185M1090,335L1068,365L1070,405L1120,500L1122,560L1035,655L1010,710L965,775L975,800M765,785L790,775L850,772L925,808L945,800L975,780M765,785L825,880L775,900L815,990M810,935L852,1005M780,1040L800,1055M1262,408L1290,415M1238,435L1290,445M1280,640L1308,657M1315,455L1338,458M60,805L95,780M60,805L135,870L200,880L190,860L205,855M30,940L145,1025M40,955L10,1045L5,1075M0,740L45,730M0,760L45,755M10,780L15,730M700,780L672,782L720,815M885,830L890,842",
    major:
      "M778,0L755,45L752,85L760,130L772,235L775,320L805,380L815,455L750,495L700,550L658,577L610,572L548,560L520,570L495,600L483,650L482,712L475,720L350,770L310,812L285,830L270,850L245,842L218,848M0,555L20,570L38,595L42,625L58,650M0,675L58,650L88,655L150,705L162,760L162,790L205,825L225,870L230,920L190,980L150,1030L135,1100L55,1195L62,1300M0,800L40,840L70,905L115,932L185,942L198,960M1340,330L1300,395L1298,440L1325,530L1322,575L1310,610L1260,645L1185,742L1135,782L1075,800L1040,808L995,805L920,822L835,878L845,940L812,985L800,1060L850,1168M1340,1165L1150,1300",
  },
];

type Label = [text: string, x: number, width: number, y: number, small?: boolean];

const labels: Label[] = [
  ["Anjuna", 1508, 64.5, 601.5],
  ["Assagao", 1727.7, 76.6, 548],
  ["Arpora", 1696, 64, 812.7],
  ["Baga", 1579, 46, 832],
  ["Parra", 1926.6, 52.4, 687.7],
  ["Paliem", 2245, 64.7, 709.3],
  ["Guirim", 2048.4, 63, 805.3],
  ["Nagoa", 1841.7, 58.6, 839.3],
  ["Mapusa", 2134, 70, 529],
  ["Aldona", 2721.3, 64, 564],
  ["Nachinola", 2510, 92.7, 594.7],
  ["Ucassaim", 2386, 89.6, 638.7],
  ["Olaulim", 2672, 72, 745],
  ["Pomburpa", 2588, 98, 796.3],
  ["Socorro Plateau", 2471, 126.3, 844, true],
  ["Calangute", 1673.6, 94.3, 978.3],
  ["Saligao", 1931, 68.3, 953],
  ["Candolim", 1701.8, 88.2, 1228.3],
  ["Nerul", 1909, 50.6, 1337],
  ["Porvorim", 2195.7, 85.3, 964.7],
  ["Verem", 2110.7, 61, 1338],
  ["Betim", 2350.3, 54, 1344],
  ["Salvador", 2446.7, 81.6, 1019.7],
  ["do Mundo", 2442.7, 90, 1046],
  ["Chorão", 2773.7, 66.3, 966.3],
  ["Chorao Island", 2538.7, 108, 1239, true],
  ["(Dr.Salim Ali) WLS", 2520.3, 145, 1258.7, true],
];

function Stroke({ pick, color, width }: { pick: (t: Tile) => string | undefined; color: string; width: number }) {
  return (
    <g fill="none" stroke={color} strokeWidth={width} strokeLinejoin="round" strokeLinecap="round">
      {tiles.map((t, i) => (
        <g key={i} transform={t.transform}>
          <path d={pick(t) ?? ""} vectorEffect="non-scaling-stroke" />
        </g>
      ))}
    </g>
  );
}

function Fill({ pick, color }: { pick: (t: Tile) => string | undefined; color: string }) {
  return (
    <g fill={color}>
      {tiles.map((t, i) => (
        <path key={i} transform={t.transform} d={pick(t) ?? ""} />
      ))}
    </g>
  );
}

function MapDrawing() {
  return (
    <svg className="block h-[800px] w-[2205px]" viewBox="681 532 2205 800">
      <rect x="681" y="532" width="2205" height="800" fill="#343230" />
      <Fill pick={(t) => t.shade} color="#323230" />
      <Fill pick={(t) => t.patch} color="#393836" />
      <rect x="681" y="532" width="721" height="800" fill="#191b1a" />
      <rect x="1400" y="938" width="102" height="394" fill="#191b1a" />
      <Fill pick={(t) => t.water} color="#191b1a" />
      <path
        transform="translate(2440 900) scale(0.33333)"
        d="M1082,1105L1065,1170L1030,1212L930,1300L860,1295L845,1265L880,1210L960,1155L1030,1118Z"
        fill="#343230"
      />
      <Stroke pick={(t) => t.creek} color="#191b1a" width={5} />
      <Stroke pick={(t) => t.river} color="#191b1a" width={3} />
      <Stroke pick={(t) => t.stream} color="#1f1f1e" width={1.3} />
      <Stroke pick={(t) => t.minor} color="#3f3f3e" width={1.1} />
      <Stroke pick={(t) => t.major} color="#2b2a2a" width={5.4} />
      <Stroke pick={(t) => t.highway} color="#2b2a2a" width={8.4} />
      <Stroke pick={(t) => t.major} color="#454545" width={3.2} />
      <Stroke pick={(t) => t.highway} color="#474747" width={6} />
      <g fontFamily="Roboto, sans-serif" stroke="#262524" strokeWidth="3" strokeLinejoin="round" paintOrder="stroke">
        {labels.map(([text, x, width, y, small]) => (
          <text
            key={text}
            x={x}
            y={y}
            textLength={width}
            lengthAdjust="spacingAndGlyphs"
            fontSize={small ? 18 : 21.5}
            fontWeight={small ? 500 : 400}
            fill={small ? "#a6a6a6" : "#bdbdbd"}
          >
            {text}
          </text>
        ))}
      </g>
      {/* hazard rectangle, geofence circle, and the area where they overlap */}
      <path d="M1513 787H1580.600A249.400 249.400 0 0 0 1596 1097H1513Z" fill="rgba(238,138,56,0.16)" />
      <path d="M1580.600 787A249.400 249.400 0 1 1 1596 1097H1877V787Z" fill="rgba(48,110,232,0.25)" />
      <path d="M1580.600 787H1877V1097H1596A249.400 249.400 0 0 1 1580.600 787Z" fill="rgba(120,158,220,0.25)" />
      <rect x="1513" y="787.3" width="364" height="309.5" fill="none" stroke="rgba(236,146,52,0.8)" strokeWidth="1.7" />
      <circle cx="1783.5" cy="932.5" r="3.4" fill="#ffff4d" />
      <circle cx="1714.5" cy="1041.7" r="2" fill="#3f9a2a" />
      <circle cx="2339" cy="1326.7" r="2" fill="#3f9a2a" />
      <circle cx="709.3" cy="1304.3" r="16" fill="#0d0e0e" opacity="0.6" />
      <circle cx="709.3" cy="1304.3" r="14.4" fill="#e9e9e9" />
      <path d="M702.3 1311.800v-8.500a8.200 8.200 0 1 1 8.200 8.500z" fill="#1a1c1b" />
      <path d="M711 1298.600l1.200 2.900 2.900 1.200-2.900 1.200-1.200 2.900-1.200-2.900-2.900-1.200 2.900-1.200z" fill="#e9e9e9" />
      <text
        x="729.5"
        y="1312"
        textLength="99"
        lengthAdjust="spacingAndGlyphs"
        fontFamily="Lato, sans-serif"
        fontWeight="700"
        fontSize="27"
        fill="#e6e6e6"
        stroke="#0d0e0e"
        strokeWidth="2"
        paintOrder="stroke"
      >
        mapbox
      </text>
    </svg>
  );
}

function Radio({ label, checked }: { label: string; checked?: boolean }) {
  return (
    <label className="flex h-[41px] items-center gap-[13px] text-[23px]">
      {checked ? (
        <span className="flex size-[26px] items-center justify-center rounded-full bg-[#ef5b55]">
          <span className="size-[10px] rounded-full bg-[#f0f1f6]" />
        </span>
      ) : (
        <span className="size-[26px] rounded-full bg-[#74757a] p-[1.6px]">
          <span className="block size-full rounded-full bg-[#2a2a33]" />
        </span>
      )}
      <span className="leading-[41px]">{label}</span>
    </label>
  );
}

function NumberField({ value, className }: { value: string; className: string }) {
  return (
    <div className={"ml-px flex w-[431px] items-center rounded-[12px] bg-[#0f1216] pl-[13px] text-[23px] " + className}>
      <span className="flex-1 pb-[4px]">{value}</span>
      <svg width="92" height="20" viewBox="0 0 92 20" fill="none" stroke="#fafafa" strokeWidth="2.8">
        <path d="M9 10h13.500M60 10h13M66.500 3.500v13" />
      </svg>
    </div>
  );
}

function Sidebar() {
  return (
    <aside className="flex w-[553px] shrink-0 flex-col bg-[#272730] pl-[28px] pt-[153px] text-[#fafafa]">
      <h2 className="h-[46px] text-[34.6px] font-bold leading-[46px] tracking-[-0.66px] [-webkit-text-stroke:0.5px]">Smart Tourism POC</h2>
      <p className="mt-[29px] h-[32px] text-[20.2px] leading-[32px]">Choose view</p>
      <div className="mt-[11px]">
        <Radio label="Tourist App" checked />
        <Radio label="Authority Dashboard" />
        <Radio label="Merkle Auditor" />
      </div>
      <p className="mt-[24px] h-[40px] text-[23px] leading-[40px]">
        Session user: <b className="tracking-[-0.35px]">user-ce5e61e2</b>
      </p>
      <section className="mt-[27px] h-[599px] w-[487px] rounded-[13px] border border-[#4b4c54] pl-[26px] pt-[19px]">
        <div className="flex h-[32px] w-[432px] items-center justify-between text-[20.2px] leading-[32px]">
          <span>Demo Controls</span>
          <svg className="mr-[6px]" width="18" height="12" viewBox="0 0 18 12" fill="none" stroke="#fafafa" strokeWidth="2.6">
            <path d="M1.500 10L9 2.600l7.500 7.400" />
          </svg>
        </div>
        <div className="mt-[21px] flex gap-[16px]">
          <span className="mt-[9px] h-[25px] w-[26px] shrink-0 rounded-[6px] border border-[#7e7e86]" />
          <span className="w-[330px] text-[22.9px] leading-[39px]">Offline mode (simulate no network)</span>
        </div>
        <p className="mt-[28px] h-[32px] text-[20.2px] leading-[32px]">Your lat</p>
        <NumberField value="15.550000" className="mt-[13px] h-[61px]" />
        <p className="mt-[28px] h-[32px] text-[20.2px] leading-[32px]">Your lon</p>
        <NumberField value="73.770000" className="mt-[13px] h-[62px]" />
        <button className="mt-[27px] flex h-[64px] w-[211px] items-center justify-center rounded-[13px] border border-[#54555d] bg-[#2b2b35] pb-[4px] text-[23px] [-webkit-text-stroke:0.35px]">
          Update location
        </button>
        <p className="mt-[25px] h-[32px] whitespace-nowrap text-[20.1px] leading-[32px] text-[#9c9da9]">
          Tip: 15.55,73.76 (Baga) | 15.49,73.78 (Aguada).
        </p>
      </section>
    </aside>
  );
}

export default function App() {
  return (
    <div className="flex h-[1738px] w-[3014px] flex-col overflow-hidden bg-[#0e1116] font-['Noto_Sans_CJK_SC',sans-serif] text-[#fafafa] [-webkit-text-stroke:0.35px]">
      <div className="flex h-[16px] shrink-0 justify-center bg-[#3b3b4d] pl-[61px]">
        <div className="h-[2px] w-[2570px] rounded-b-[8px] bg-[#24243a]" />
      </div>
      <div className="h-[3px] shrink-0 bg-linear-to-r from-[#ee5a52] to-[#fffb82]" />
      <div className="flex flex-1">
        <Sidebar />
        <main className="flex flex-1 flex-col pl-[128px]">
          <header className="flex h-[110px] items-center justify-end pr-[56px]">
            <span className="pb-[2px] text-[20px] leading-[32px]">Deploy</span>
            <svg className="ml-[40px]" width="10" height="28" viewBox="0 0 10 28" fill="#fafafa">
              <circle cx="5" cy="6" r="2.7" />
              <circle cx="5" cy="14" r="2.7" />
              <circle cx="5" cy="22" r="2.7" />
            </svg>
          </header>
          <h1 className="mt-[62px] h-[100px] text-[64.5px] font-bold leading-[100px] tracking-[-0.7px] [-webkit-text-stroke:1.4px]">
            Tourist App (Prototype)
          </h1>
          <div className="mt-[21px] flex h-[89px] w-[2205px] items-center rounded-[13px] bg-[#3e3a22] pl-[26px] text-[22.9px] text-[#ffffc2]">
            <svg className="mr-[5px] mb-[3px]" width="27" height="25" viewBox="0 0 27 25">
              <path d="M13.500 2L25.500 23.500H1.500z" fill="#fbcb42" stroke="#fbcb42" strokeWidth="1.500" strokeLinejoin="round" />
              <path d="M13.500 8.500v7.500M13.500 19v2.200" stroke="#2b2a2a" strokeWidth="2.600" strokeLinecap="round" />
            </svg>
            <span className="pb-[2px]">Risk zone ahead: Baga–Calangute Belt</span>
          </div>
          <nav className="mt-[36px] flex h-[57px] w-[2205px] gap-[26px] border-b-[3px] border-[#25282d] text-[20px] leading-[40px]">
            <span className="h-[57px] border-b-[3px] border-[#ef5b55] text-[#ef5b55]">Map</span>
            <span>Report Hazard</span>
            <span>Alerts</span>
            <span>SOS</span>
            <span>Trip Report</span>
          </nav>
          <div className="mt-[38px] flex">
            <div className="relative h-[800px] w-[2205px] overflow-hidden [-webkit-text-stroke:0]">
              <MapDrawing />
              <div className="absolute right-[21px] top-[20px] flex w-[46px] flex-col bg-[#0e1116]">
                <svg width="46" height="46" viewBox="0 0 46 46" stroke="#d6d6d6" strokeWidth="5" strokeLinecap="round">
                  <path d="M16.500 23h13M23 16.500v13" />
                </svg>
                <svg className="border-t border-[#2b2e33]" width="46" height="46" viewBox="0 0 46 46" stroke="#d6d6d6" strokeWidth="5" strokeLinecap="round">
                  <path d="M16.500 23h13" />
                </svg>
              </div>
              <div className="absolute bottom-0 right-0 flex h-[32px] w-[438px] items-center justify-between whitespace-nowrap bg-white/50 pl-[9px] pr-[8px] font-['Liberation_Sans',sans-serif] text-[19.4px] text-black/75">
                <span>© Mapbox © OpenStreetMap</span>
                <b>Improve this map</b>
              </div>
            </div>
            <button className="-mt-[22px] ml-[13px] flex size-[64px] items-center justify-center rounded-full bg-[#131620]">
              <svg width="24" height="24" viewBox="0 0 24 24" fill="#a5a6aa">
                <path d="M0 0h11.500L7.600 3.900l4.600 4.600-3.700 3.700-4.600-4.600L0 11.500zM24 24H12.500l3.900-3.900-4.600-4.600 3.700-3.700 4.600 4.600L24 12.500z" />
              </svg>
            </button>
          </div>
        </main>
      </div>
    </div>
  );
}
